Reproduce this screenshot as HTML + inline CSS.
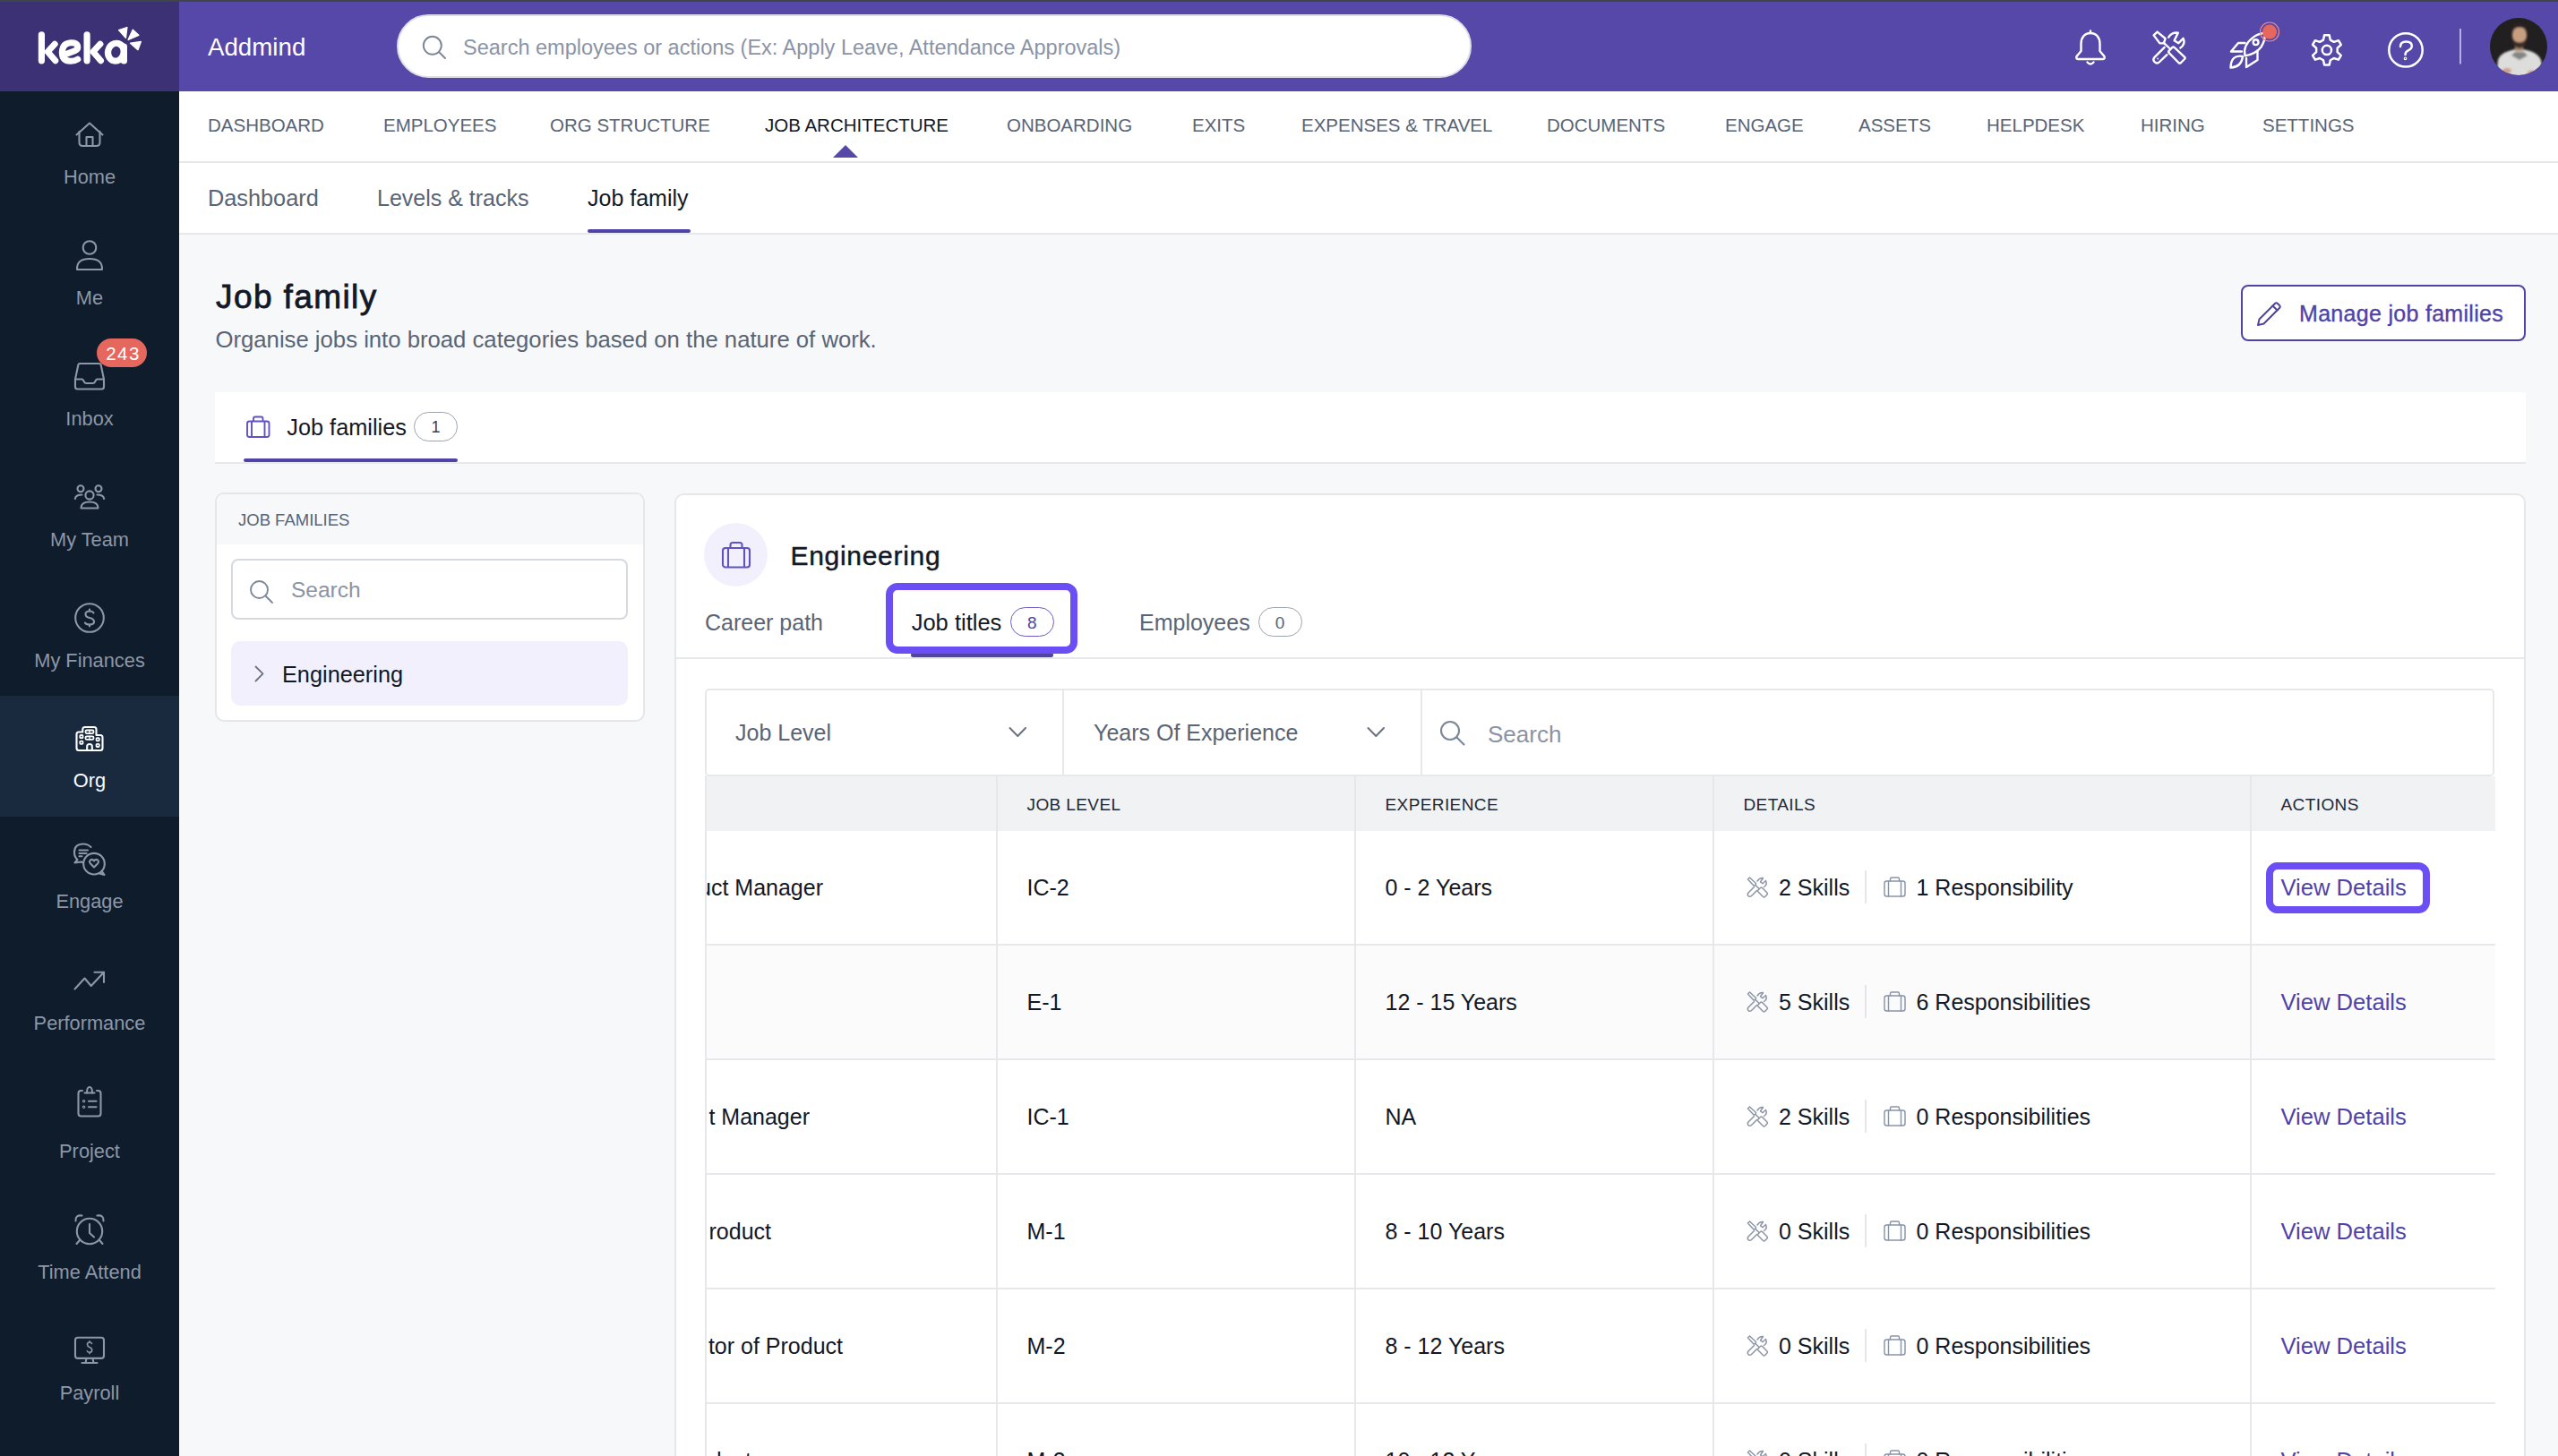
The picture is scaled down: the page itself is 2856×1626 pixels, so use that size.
<!DOCTYPE html>
<html>
<head>
<meta charset="utf-8">
<style>
*{margin:0;padding:0;box-sizing:border-box;}
html,body{width:2856px;height:1626px;overflow:hidden;background:#f7f8fa;font-family:"Liberation Sans",sans-serif;}
.a{position:absolute;}
.t{position:absolute;white-space:nowrap;line-height:1;}
svg{position:absolute;overflow:visible;}
/* top */
#strip{left:0;top:0;width:2856px;height:2px;background:#40454a;}
#logo{left:0;top:2px;width:200px;height:100px;background:#3c3175;}
#hdr{left:200px;top:2px;width:2656px;height:100px;background:#5548a8;}
#search{left:443px;top:16px;width:1200px;height:71px;border-radius:36px;background:#fff;border:2px solid #dcdde6;}
#side{left:0;top:102px;width:200px;height:1524px;background:#0e1c2b;}
.sitem{position:absolute;left:0;width:200px;height:135px;}
.sitem.on{background:#192a3f;}
.slab{position:absolute;left:0;width:200px;text-align:center;font-size:21.8px;line-height:1;top:85px;color:#8d97a7;white-space:nowrap;}
.sitem.on .slab{color:#fff;}
#nav{left:200px;top:102px;width:2656px;height:80px;background:#fff;border-bottom:2px solid #e6e8eb;}
.nv{font-size:20.5px;color:#596475;top:129.6px;}
#sub{left:200px;top:182px;width:2656px;height:80px;background:#fff;border-bottom:2px solid #e6e8eb;}
.sb{font-size:25px;color:#596475;top:209px;}
.dark{color:#121826;}
.gray{color:#596475;}
.ph{color:#8a94a6;}
.purple{color:#4f43a7;}
.th{font-size:19px;color:#1f2937;top:889px;letter-spacing:0.4px;}
.td{font-size:25px;}

</style>
</head>
<body>
<div id="strip" class="a"></div>
<div id="logo" class="a"></div>
<svg style="left:0;top:0" width="200" height="102" viewBox="0 0 200 102" fill="none" stroke="#fff" stroke-linecap="round" stroke-linejoin="round">
  <path d="M46.4,38.8 V67.8" stroke-width="7.2"/>
  <path d="M61.2,49.2 L53.2,57.8 L61.8,67.8" stroke-width="7"/>
  <path d="M97.1,38.8 V67.8" stroke-width="7.2"/>
  <path d="M111.9,49.2 L103.9,57.8 L112.5,67.8" stroke-width="7"/>
  <path d="M73.5,60.5 L83.5,56.8 Q87.8,55 86.5,50.8 Q85,47.5 79,47.8 Q69.8,48.4 69.3,58.3 Q69.2,68.2 78.8,68.3 Q83.5,68.4 86.8,66.2" stroke-width="7"/>
  <ellipse cx="129.4" cy="58.2" rx="8.8" ry="10" stroke-width="7.2" transform="rotate(15 129.4 58.2)"/>
  <path d="M138.4,52 V68" stroke-width="7.2"/>
  <g fill="#fff" stroke-width="1.5">
    <polygon points="132.6,33.6 141.8,30.6 140.4,42.2"/>
    <polygon points="143.2,44.4 148.3,33.2 154.8,39.3"/>
    <polygon points="145.6,48.2 157.3,46.5 154,55.6"/>
  </g>
</svg>

<div id="hdr" class="a"></div>
<div class="t" style="left:232px;top:39px;font-size:27.7px;color:#fff;">Addmind</div>
<div id="search" class="a"></div>
<svg style="left:471px;top:38.5px" width="28" height="28" viewBox="0 0 28 28"><circle cx="11.8" cy="11.8" r="10" fill="none" stroke="#7d879a" stroke-width="1.9"/><line x1="19" y1="19" x2="26" y2="26" stroke="#7d879a" stroke-width="1.9" stroke-linecap="round"/></svg>
<div class="t ph" style="left:517px;top:42px;font-size:23.5px;">Search employees or actions (Ex: Apply Leave, Attendance Approvals)</div>


<!-- HEADER ICONS -->
<svg style="left:0;top:0" width="2856" height="102" viewBox="0 0 2856 102" fill="none" stroke="#ffffff" stroke-width="2.4" stroke-linecap="round" stroke-linejoin="round">
  <!-- bell -->
  <path d="M2334,34.5 V37"/>
  <path d="M2334,37 C2327,37 2323.5,42.5 2323.5,49 V57 L2318.5,63 Q2317.5,66 2320.5,66 H2347.5 Q2350.5,66 2349.5,63 L2344.5,57 V49 C2344.5,42.5 2341,37 2334,37 Z"/>
  <path d="M2330.5,69.5 Q2334,73.5 2337.5,69.5"/>
  <!-- tools -->
  <path d="M2404.6,39.4 L2408.6,35.6 L2417.6,43 L2416,48.2 L2411.4,48.4 Z"/>
  <path d="M2415.6,47.6 L2422.4,54"/>
  <path d="M2421.8,56.6 L2425.2,53.2 Q2426.5,52 2427.8,53.2 L2439,63.6 Q2440.2,64.8 2439,66 L2435,70 Q2433.7,71.2 2432.4,70 L2421.8,59.2 Q2420.6,57.9 2421.8,56.6 Z"/>
  <path d="M2416.6,52.8 L2405.8,63.6 Q2403,66.5 2405.6,69.2 Q2408.3,71.8 2411.2,69 L2419.4,61.2"/>
  <path d="M2421.2,41.6 Q2424.5,36 2431.8,36.6 L2427.6,45.2 L2432.3,48.2 L2437.6,42.8 Q2440.5,49.5 2434.3,53.4"/>
  <circle cx="2409.2" cy="65.4" r="0.3" stroke-width="1.4"/>
  <!-- rocket -->
  <path d="M2506.6,62.4 Q2503.8,50.5 2515.8,41.6 Q2521,37.6 2529,36.6 Q2529,46 2524.5,52.5 Q2519,60 2506.6,62.4 Z"/>
  <circle cx="2518.6" cy="47.2" r="2.9"/>
  <path d="M2506.5,48 H2499 L2491,57.5 H2503"/>
  <path d="M2520.5,56.5 V67 L2508,75 V65"/>
  <path d="M2504,63 Q2491,60.5 2490.5,75.5 Q2502.5,75 2504,63 Z"/>
</svg>
<svg style="left:0;top:0" width="2856" height="102" viewBox="0 0 2856 102" fill="none" stroke="#ffffff" stroke-width="2.5" stroke-linecap="round" stroke-linejoin="round">
  <!-- red dot -->
  <circle cx="2534" cy="35.5" r="10.5" stroke="#f08a80" stroke-width="1.2" fill="none"/>
  <circle cx="2534" cy="35.5" r="8" fill="#e5675e" stroke="none"/>
  <!-- gear -->
  <path id="gear" d="M2593.99,44.55 L2595.11,39.23 L2600.69,39.23 L2601.81,44.55 L2605.77,46.84 L2610.94,45.15 L2613.73,49.98 L2609.68,53.61 L2609.68,58.19 L2613.73,61.82 L2610.94,66.65 L2605.77,64.96 L2601.81,67.25 L2600.69,72.57 L2595.11,72.57 L2593.99,67.25 L2590.03,64.96 L2584.86,66.65 L2582.07,61.82 L2586.12,58.19 L2586.12,53.61 L2582.07,49.98 L2584.86,45.15 L2590.03,46.84 Z"/>
  <circle cx="2597.9" cy="55.9" r="5.1"/>
  <!-- help -->
  <circle cx="2686" cy="55.9" r="18.7"/>
  <path d="M2680,52 Q2680,46.5 2686.5,46.5 Q2692.8,46.5 2692.8,51.5 Q2692.8,54.5 2688.5,56.5 Q2685.5,58 2685.5,61"/>
  <circle cx="2685.5" cy="65.3" r="0.6" stroke-width="2.6"/>
  <!-- divider -->
  <path d="M2747,32 V71.5" stroke="#b6afe0" stroke-width="2" stroke-linecap="butt"/>
</svg>
<!-- avatar -->
<svg style="left:2780px;top:20px" width="64" height="64" viewBox="0 0 64 64">
  <defs><clipPath id="avc"><circle cx="32" cy="32" r="32"/></clipPath>
  <filter id="blr" x="-10%" y="-10%" width="120%" height="120%"><feGaussianBlur stdDeviation="0.9"/></filter></defs>
  <g clip-path="url(#avc)">
    <rect width="64" height="64" fill="#211f20"/>
    <g filter="url(#blr)">
    <path d="M7,66 L9,47 Q11,40 21,37 L28,35 H37 L45,37 Q54,40 57,47 L60,66 Z" fill="#dddddb"/>
    <path d="M24,42 L33,47 L42,42 L38,38 H28 Z" fill="#858583"/>
    <rect x="28" y="27" width="9" height="10" fill="#a98468"/>
    <ellipse cx="33" cy="20" rx="8.2" ry="10.5" fill="#c79e80"/>
    <path d="M24.5,17 Q23.5,5 33,5 Q42,5 41.5,17 Q40.5,10.5 33,10.5 Q26,10.5 24.5,17 Z" fill="#2a2220"/>
    <path d="M25,21 Q25,33 33,34 Q41,33 41,21 Q39,27.5 33,27.5 Q27,27.5 25,21 Z" fill="#3a2d27"/>
    <ellipse cx="19" cy="59" rx="5" ry="3" fill="#d09f86"/>
    <ellipse cx="47" cy="61" rx="5" ry="2.5" fill="#d09f86"/>
    </g>
  </g>
</svg>

<div id="side" class="a"></div>

<!-- SIDEBAR -->
<div class="sitem" style="top:102px"><div class="slab" style="top:84.82px">Home</div></div>
<div class="sitem" style="top:237px"><div class="slab" style="top:84.52px">Me</div></div>
<div class="sitem" style="top:372px"><div class="slab" style="top:84.72px">Inbox</div></div>
<div class="sitem" style="top:507px"><div class="slab" style="top:84.82px">My Team</div></div>
<div class="sitem" style="top:642px"><div class="slab" style="top:84.52px">My Finances</div></div>
<div class="sitem on" style="top:777px"><div class="slab" style="top:84.32px">Org</div></div>
<div class="sitem" style="top:912px"><div class="slab" style="top:84.32px">Engage</div></div>
<div class="sitem" style="top:1047px"><div class="slab" style="top:84.52px">Performance</div></div>
<div class="sitem" style="top:1182px"><div class="slab" style="top:92.52px">Project</div></div>
<div class="sitem" style="top:1317px"><div class="slab" style="top:92.82px">Time Attend</div></div>
<div class="sitem" style="top:1452px"><div class="slab" style="top:92.52px">Payroll</div></div>
<svg style="left:0;top:0" width="200" height="1626" viewBox="0 0 200 1626" fill="none" stroke="#8d97a7" stroke-width="2.1" stroke-linecap="round" stroke-linejoin="round">
  <!-- home -->
  <path d="M85.5,150.5 L100,137.5 L114.5,150.5"/>
  <path d="M88.5,147 V159 Q88.5,163 92.5,163 H107.5 Q111.5,163 111.5,159 V147"/>
  <path d="M96.5,163 V153 H103.5 V163" stroke-linecap="butt"/>
  <!-- me -->
  <circle cx="100" cy="276.5" r="7.3"/>
  <path d="M86,301 Q85.5,289 100,289 Q114.5,289 114,301 Z"/>
  <!-- inbox -->
  <path d="M89,406 H111 Q112.3,406 112.6,407.3 L116,423.5 V432 Q116,434.5 113.5,434.5 H86.5 Q84,434.5 84,432 V423.5 L87.4,407.3 Q87.7,406 89,406 Z"/>
  <path d="M84,423.5 H91.5 Q92.5,423.5 93.2,425 L94,426.5 Q94.8,428 96.3,428 H103.7 Q105.2,428 106,426.5 L106.8,425 Q107.5,423.5 108.5,423.5 H116"/>
  <!-- team -->
  <circle cx="100" cy="553" r="4.6"/>
  <path d="M90.5,567.5 Q90.5,560.5 100,560.5 Q109.5,560.5 109.5,567.5 Z"/>
  <circle cx="90" cy="545.8" r="3.5"/>
  <circle cx="110" cy="545.8" r="3.5"/>
  <path d="M83.8,557 Q84.5,552.5 91.5,552.5"/>
  <path d="M116.2,557 Q115.5,552.5 108.5,552.5"/>
  <!-- finances -->
  <circle cx="100" cy="690" r="15.8"/>
  <path d="M104.5,684.5 Q103.5,682.5 100,682.5 Q95.5,682.5 95.5,686 Q95.5,689 100,690 Q105,691 105,694.5 Q105,697.5 100,697.5 Q96,697.5 95,695.5"/>
  <path d="M100,680.5 V682.5 M100,697.5 V699.5"/>
  <!-- engage -->
  <path d="M101.5,946 Q98,942.5 93,942.5 Q83,942.5 83,952 Q83,957 86.5,960 L83.5,963.5 L90.5,962.5 Q91.5,963 93,963"/>
  <path d="M88.5,949.5 H98 M88.5,953 H96.5 M88.5,956.2 H91.5"/>
  <circle cx="105" cy="964.7" r="11.8"/>
  <path d="M113.5,973 L116.5,977 L111,975.5"/>
  <path d="M105,968.5 L100.8,964.2 Q99,962 101,960.5 Q103.3,959 105,961.5 Q106.7,959 109,960.5 Q111,962 109.2,964.2 Z"/>
  <!-- performance -->
  <path d="M83.5,1104.5 L94.5,1092.5 L101.7,1101 L116,1085.8"/>
  <path d="M105.5,1085.8 H116 V1097"/>
  <!-- project -->
  <path d="M92,1218 H90.5 Q87.5,1218 87.5,1221 V1243.5 Q87.5,1246.5 90.5,1246.5 H109.5 Q112.5,1246.5 112.5,1243.5 V1221 Q112.5,1218 109.5,1218 H108"/>
  <path d="M94.5,1220.5 H105.5"/>
  <path d="M97,1220.5 Q97,1214 100,1214 Q103,1214 103,1220.5"/>
  <path d="M99,1229.8 H107.5 M99,1236.3 H107.5"/>
  <circle cx="93.6" cy="1229.8" r="0.6" stroke-width="2.4"/>
  <circle cx="93.6" cy="1236.3" r="0.6" stroke-width="2.4"/>
  <!-- time -->
  <circle cx="100" cy="1375" r="14.2"/>
  <path d="M100,1367 V1377 L105,1381.5"/>
  <path d="M84.5,1363.5 Q84,1356.5 91.5,1357.5"/>
  <path d="M115.5,1363.5 Q116,1356.5 108.5,1357.5"/>
  <path d="M89,1385 L85.5,1389 M111,1385 L114.5,1389"/>
  <!-- payroll -->
  <rect x="84" y="1493.7" width="32" height="23.2" rx="3"/>
  <path d="M96.5,1517 L95.5,1522 M103.5,1517 L104.5,1522 M91.5,1522 H108.5"/>
  <path d="M102.5,1500.5 Q102,1499 100,1499 Q97.5,1499 97.5,1501.5 Q97.5,1503.5 100,1504.5 Q102.7,1505.5 102.7,1507.7 Q102.7,1510.3 100,1510.3 Q97.8,1510.3 97.3,1508.8 M100,1497.7 V1499 M100,1510.3 V1511.7" stroke-width="1.6"/>
  <!-- org (white) -->
  <g stroke="#ffffff">
    <path d="M92.3,817.5 H88 Q85.5,817.5 85.5,820 V835.5 Q85.5,838 88,838 H112 Q114.5,838 114.5,835.5 V823.5 Q114.5,821 112,821 H107.5 V814.5 Q107.5,812 105,812 H95 Q92.3,812 92.3,814.5 Z"/>
    <path d="M97.2,838 V833.5 Q97.2,831 100,831 Q102.8,831 102.8,833.5 V838"/>
    <rect x="95.5" y="815.5" width="9" height="3.6" rx="1.5" stroke-width="1.8"/>
    <rect x="95.5" y="822.3" width="9" height="3.6" rx="1.5" stroke-width="1.8"/>
    <path d="M100,815.5 V819 M100,822.3 V826" stroke-width="1.4"/>
    <rect x="89.3" y="821" width="3.2" height="3.2" rx="0.8" stroke-width="1.8"/>
    <rect x="89.3" y="827.6" width="3.2" height="3.2" rx="0.8" stroke-width="1.8"/>
    <rect x="107.6" y="824.2" width="3.2" height="3.2" rx="0.8" stroke-width="1.8"/>
    <rect x="107.6" y="830.8" width="3.2" height="3.2" rx="0.8" stroke-width="1.8"/>
  </g>
</svg>
<div class="a" style="left:108px;top:378px;width:56px;height:32px;border-radius:16px;background:#e5675e;"></div>
<div class="t" style="left:109.5px;top:384.5px;width:56px;text-align:center;font-size:20.5px;letter-spacing:1.5px;color:#fff;">243</div>

<div id="nav" class="a"></div>
<div class="t nv" style="left:232px">DASHBOARD</div>
<div class="t nv" style="left:428px">EMPLOYEES</div>
<div class="t nv" style="left:614px">ORG STRUCTURE</div>
<div class="t nv dark" style="left:854px">JOB ARCHITECTURE</div>
<div class="t nv" style="left:1124px">ONBOARDING</div>
<div class="t nv" style="left:1331px">EXITS</div>
<div class="t nv" style="left:1453px">EXPENSES &amp; TRAVEL</div>
<div class="t nv" style="left:1727px">DOCUMENTS</div>
<div class="t nv" style="left:1926px">ENGAGE</div>
<div class="t nv" style="left:2075px">ASSETS</div>
<div class="t nv" style="left:2218px">HELPDESK</div>
<div class="t nv" style="left:2390px">HIRING</div>
<div class="t nv" style="left:2526px">SETTINGS</div>
<svg style="left:930px;top:162px" width="28" height="14" viewBox="0 0 28 14"><polygon points="14,0 28,14 0,14" fill="#5548a8"/></svg>

<div id="sub" class="a"></div>
<div class="t sb" style="left:232px;font-size:25.3px;top:208.7px">Dashboard</div>
<div class="t sb" style="left:421px">Levels &amp; tracks</div>
<div class="t sb dark" style="left:656px">Job family</div>
<div class="a" style="left:656px;top:256px;width:115px;height:4px;border-radius:2px;background:#4f43a7"></div>


<!-- MAIN -->
<div class="t dark" style="left:241px;top:312.6px;font-size:37px;letter-spacing:1.4px;-webkit-text-stroke:0.8px #121826;">Job family</div>
<div class="t gray" style="left:240.5px;top:366.7px;font-size:25.7px;">Organise jobs into broad categories based on the nature of work.</div>
<div class="a" style="left:2502px;top:318px;width:318px;height:63px;border:2px solid #4f43a7;border-radius:8px;background:#fff;"></div>
<svg style="left:2518px;top:334px" width="32" height="32" viewBox="0 0 32 32" fill="none" stroke="#4f43a7" stroke-width="2" stroke-linejoin="round" stroke-linecap="round">
  <path d="M3,29 L4.5,22.5 L22,5 Q23.5,3.5 25,5 L27,7 Q28.5,8.5 27,10 L9.5,27.5 Z"/>
  <path d="M19.5,7.5 L24.5,12.5"/>
</svg>
<div class="t purple" style="left:2567px;top:337.8px;font-size:25px;letter-spacing:0.3px;-webkit-text-stroke:0.35px #4f43a7;">Manage job families</div>

<div class="a" style="left:240px;top:438px;width:2580px;height:80px;background:#fff;border-bottom:2px solid #e6e8eb;"></div>
<svg style="left:272px;top:462px" width="32" height="30" viewBox="0 0 32 30" fill="none" stroke="#5f52c4" stroke-width="1.9" stroke-linejoin="round">
  <rect x="4" y="8.5" width="24.5" height="17.5" rx="2.5"/>
  <path d="M11,8.5 V5.5 Q11,3.5 13,3.5 H19.5 Q21.5,3.5 21.5,5.5 V8.5"/>
  <path d="M9,8.5 V26 M23.5,8.5 V26"/>
</svg>
<div class="t dark" style="left:320.3px;top:465.2px;font-size:25.3px;">Job families</div>
<div class="a" style="left:462px;top:460px;width:49px;height:33px;border:1.5px solid #9ca3af;border-radius:17px;"></div>
<div class="t" style="left:462px;top:468px;width:49px;text-align:center;font-size:18px;color:#374151;">1</div>
<div class="a" style="left:272px;top:512px;width:239px;height:4px;border-radius:2px;background:#4f43a7"></div>

<!-- LEFT CARD -->
<div class="a" style="left:240px;top:550px;width:480px;height:256px;border:2px solid #e4e6ea;border-radius:10px;background:#fff;overflow:hidden;">
  <div class="a" style="left:0;top:0;width:476px;height:56px;background:#f7f8fa;"></div>
</div>
<div class="t gray" style="left:266px;top:572px;font-size:18.5px;">JOB FAMILIES</div>
<div class="a" style="left:258px;top:624px;width:443px;height:67.5px;border:2px solid #d6d9de;border-radius:8px;background:#fff;"></div>
<svg style="left:278px;top:647px" width="28" height="28" viewBox="0 0 28 28" fill="none" stroke="#7d879a" stroke-width="1.85" stroke-linecap="round"><circle cx="11.5" cy="11.5" r="9.5"/><line x1="18.5" y1="18.5" x2="26" y2="26"/></svg>
<div class="t ph" style="left:325px;top:647px;font-size:24.5px;">Search</div>
<div class="a" style="left:258px;top:716px;width:443px;height:72px;border-radius:10px;background:#f3f0fd;"></div>
<svg style="left:280px;top:740px" width="20" height="24" viewBox="0 0 20 24" fill="none" stroke="#6b7280" stroke-width="1.8" stroke-linecap="round" stroke-linejoin="round"><path d="M5.5,4.5 L13.5,12.3 L5.5,20.5"/></svg>
<div class="t dark" style="left:315px;top:740.6px;font-size:25.3px;">Engineering</div>

<!-- RIGHT CARD -->
<div class="a" style="left:753px;top:551px;width:2067px;height:1100px;border:2px solid #e6e7eb;border-radius:10px;background:#fff;"></div>
<div class="a" style="left:786px;top:584px;width:71px;height:71px;border-radius:50%;background:#f3f0fd;"></div>
<svg style="left:803px;top:602px" width="38" height="36" viewBox="0 0 38 36" fill="none" stroke="#5f52c4" stroke-width="2.1" stroke-linejoin="round">
  <rect x="4" y="10" width="30" height="21.5" rx="3"/>
  <path d="M12.5,10 V6.5 Q12.5,4 15,4 H23 Q25.5,4 25.5,6.5 V10"/>
  <path d="M10,10 V31.5 M28,10 V31.5"/>
</svg>
<div class="t dark" style="left:882.5px;top:605.6px;font-size:30px;letter-spacing:0.7px;-webkit-text-stroke:0.45px #121826;">Engineering</div>

<div class="t gray" style="left:787px;top:683px;font-size:25px;">Career path</div>
<div class="t dark" style="left:1017.7px;top:682.6px;font-size:25.5px;">Job titles</div>
<div class="a" style="left:1128px;top:678px;width:48.5px;height:33px;border:1.5px solid #6a5cc9;border-radius:17px;"></div>
<div class="t purple" style="left:1128px;top:686px;width:48.5px;text-align:center;font-size:19px;">8</div>
<div class="t gray" style="left:1272px;top:683px;font-size:25px;">Employees</div>
<div class="a" style="left:1404.5px;top:678px;width:49px;height:33px;border:1.5px solid #9ca3af;border-radius:17px;"></div>
<div class="t gray" style="left:1404.5px;top:686px;width:49px;text-align:center;font-size:19px;">0</div>
<div class="a" style="left:755px;top:734px;width:2063px;height:2px;background:#e6e8eb;"></div>
<div class="a" style="left:1017px;top:729px;width:159px;height:5px;border-radius:2.5px;background:#4f43a7"></div>

<!-- FILTER BAR -->
<div class="a" style="left:787px;top:769px;width:1998px;height:98px;border:2px solid #e6e8ec;border-radius:5px;background:#fff;"></div>
<div class="a" style="left:1186px;top:771px;width:2px;height:95px;background:#e6e8ec;"></div>
<div class="a" style="left:1586px;top:771px;width:2px;height:95px;background:#e6e8ec;"></div>
<div class="t gray" style="left:821px;top:806px;font-size:25px;">Job Level</div>
<div class="t gray" style="left:1221px;top:806px;font-size:25px;">Years Of Experience</div>
<svg style="left:0;top:0" width="2856" height="1626" viewBox="0 0 2856 1626" fill="none" stroke="#6b7280" stroke-width="2" stroke-linecap="round" stroke-linejoin="round">
  <path d="M1127.5,813 L1136.3,822 L1145,813"/>
  <path d="M1527.5,813 L1536.3,822 L1545,813"/>
</svg>
<svg style="left:1607px;top:804px" width="30" height="30" viewBox="0 0 30 30" fill="none" stroke="#7d879a" stroke-width="2.1" stroke-linecap="round"><circle cx="12" cy="12" r="10"/><line x1="19.5" y1="19.5" x2="27.5" y2="27.5"/></svg>
<div class="t ph" style="left:1661px;top:807px;font-size:26px;">Search</div>


<!-- TABLE -->
<div class="a" style="left:787px;top:867px;width:1999px;height:61px;background:#f1f2f4;"></div>
<div class="a" style="left:787px;top:866px;width:2px;height:760px;background:#e6e8ec;"></div>
<div class="a" style="left:789px;top:928px;width:1997px;height:126px;background:#ffffff;"></div>
<div class="a" style="left:789px;top:1054px;width:1997px;height:2px;background:#e6e8ec;"></div>
<div class="a" style="left:789px;top:1056px;width:1997px;height:126px;background:#fbfbfc;"></div>
<div class="a" style="left:789px;top:1182px;width:1997px;height:2px;background:#e6e8ec;"></div>
<div class="a" style="left:789px;top:1184px;width:1997px;height:126px;background:#ffffff;"></div>
<div class="a" style="left:789px;top:1310px;width:1997px;height:2px;background:#e6e8ec;"></div>
<div class="a" style="left:789px;top:1312px;width:1997px;height:126px;background:#ffffff;"></div>
<div class="a" style="left:789px;top:1438px;width:1997px;height:2px;background:#e6e8ec;"></div>
<div class="a" style="left:789px;top:1440px;width:1997px;height:126px;background:#ffffff;"></div>
<div class="a" style="left:789px;top:1566px;width:1997px;height:2px;background:#e6e8ec;"></div>
<div class="a" style="left:789px;top:1568px;width:1997px;height:126px;background:#ffffff;"></div>
<div class="a" style="left:789px;top:1694px;width:1997px;height:2px;background:#e6e8ec;"></div>
<div class="a" style="left:1112px;top:866px;width:2px;height:760px;background:#e6e8ec;"></div>
<div class="a" style="left:1512px;top:866px;width:2px;height:760px;background:#e6e8ec;"></div>
<div class="a" style="left:1912px;top:866px;width:2px;height:760px;background:#e6e8ec;"></div>
<div class="a" style="left:2512px;top:866px;width:2px;height:760px;background:#e6e8ec;"></div>
<div class="t th" style="left:1146.5px;">JOB LEVEL</div>
<div class="t th" style="left:1546.5px;">EXPERIENCE</div>
<div class="t th" style="left:1946.5px;">DETAILS</div>
<div class="t th" style="left:2546.5px;">ACTIONS</div>
<div class="a" style="left:789px;top:959px;width:323px;height:60px;overflow:hidden;"><div class="t dark rt" style="right:193px;top:20px;font-size:25px;">Product Manager</div></div>
<div class="t dark td" style="left:1146.5px;top:979.3px;">IC-2</div>
<div class="t dark td" style="left:1546.5px;top:979.3px;">0 - 2 Years</div>
<div class="t dark td" style="left:1986px;top:979.3px;">2 Skills</div>
<div class="t dark td" style="left:2139.5px;top:979.3px;">1 Responsibility</div>
<div class="t purple td" style="font-size:25.6px;left:2546.5px;top:979.3px;">View Details</div>
<div class="t dark td" style="left:1146.5px;top:1107.3px;">E-1</div>
<div class="t dark td" style="left:1546.5px;top:1107.3px;">12 - 15 Years</div>
<div class="t dark td" style="left:1986px;top:1107.3px;">5 Skills</div>
<div class="t dark td" style="left:2139.5px;top:1107.3px;">6 Responsibilities</div>
<div class="t purple td" style="font-size:25.6px;left:2546.5px;top:1107.3px;">View Details</div>
<div class="a" style="left:789px;top:1215px;width:323px;height:60px;overflow:hidden;"><div class="t dark rt" style="right:208px;top:20px;font-size:25px;">t Manager</div></div>
<div class="t dark td" style="left:1146.5px;top:1235.3px;">IC-1</div>
<div class="t dark td" style="left:1546.5px;top:1235.3px;">NA</div>
<div class="t dark td" style="left:1986px;top:1235.3px;">2 Skills</div>
<div class="t dark td" style="left:2139.5px;top:1235.3px;">0 Responsibilities</div>
<div class="t purple td" style="font-size:25.6px;left:2546.5px;top:1235.3px;">View Details</div>
<div class="a" style="left:789px;top:1343px;width:323px;height:60px;overflow:hidden;"><div class="t dark rt" style="right:251px;top:20px;font-size:25px;">roduct</div></div>
<div class="t dark td" style="left:1146.5px;top:1363.3px;">M-1</div>
<div class="t dark td" style="left:1546.5px;top:1363.3px;">8 - 10 Years</div>
<div class="t dark td" style="left:1986px;top:1363.3px;">0 Skills</div>
<div class="t dark td" style="left:2139.5px;top:1363.3px;">0 Responsibilities</div>
<div class="t purple td" style="font-size:25.6px;left:2546.5px;top:1363.3px;">View Details</div>
<div class="a" style="left:789px;top:1471px;width:323px;height:60px;overflow:hidden;"><div class="t dark rt" style="right:171px;top:20px;font-size:25px;">tor of Product</div></div>
<div class="t dark td" style="left:1146.5px;top:1491.3px;">M-2</div>
<div class="t dark td" style="left:1546.5px;top:1491.3px;">8 - 12 Years</div>
<div class="t dark td" style="left:1986px;top:1491.3px;">0 Skills</div>
<div class="t dark td" style="left:2139.5px;top:1491.3px;">0 Responsibilities</div>
<div class="t purple td" style="font-size:25.6px;left:2546.5px;top:1491.3px;">View Details</div>
<div class="a" style="left:789px;top:1599px;width:323px;height:60px;overflow:hidden;"><div class="t dark rt" style="right:273px;top:20px;font-size:25px;">Head of Product</div></div>
<div class="t dark td" style="left:1146.5px;top:1619.3px;">M-3</div>
<div class="t dark td" style="left:1546.5px;top:1619.3px;">10 - 12 Years</div>
<div class="t dark td" style="left:1986px;top:1619.3px;">0 Skills</div>
<div class="t dark td" style="left:2139.5px;top:1619.3px;">0 Responsibilities</div>
<div class="t purple td" style="font-size:25.6px;left:2546.5px;top:1619.3px;">View Details</div>
<svg style="left:0;top:0" width="2856" height="1626" viewBox="0 0 2856 1626" fill="none" stroke="#8a94a6" stroke-width="1.45" stroke-linecap="round" stroke-linejoin="round">
<defs>
 <g id="isk">
  <path d="M1.5,3.5 L3.5,1.5 L10.5,8 L10,10 L8,10.5 Z"/>
  <path d="M10,10 L14,14"/>
  <path d="M13,15.5 L15.5,13 Q16.5,12 17.5,13 L23,18.5 Q24,19.5 23,20.5 L20.5,23 Q19.5,24 18.5,23 L13,17.5 Q12,16.5 13,15.5 Z"/>
  <path d="M8.5,12 L2,18.5 Q0.5,20.5 2,22 Q3.5,23.5 5.5,22 L11.5,16"/>
  <path d="M12,5.5 Q14.5,1.5 18.5,2 L15.5,6.5 L18,8.2 L21.5,5 Q23.5,9.5 19.5,12"/>
 </g>
 <g id="ibc">
  <rect x="1" y="5.5" width="23" height="17" rx="2.5"/>
  <path d="M7.5,5.5 V3 Q7.5,1.5 9,1.5 H16 Q17.5,1.5 17.5,3 V5.5"/>
  <path d="M5.5,5.5 V22.5 M19.5,5.5 V22.5"/>
 </g>
</defs>
<use href="#isk" x="1950" y="978.5"/><use href="#ibc" x="2103" y="978.5"/><path d="M2083,973.0 V1008.0" stroke="#e3e5ea" stroke-width="2"/>
<use href="#isk" x="1950" y="1106.5"/><use href="#ibc" x="2103" y="1106.5"/><path d="M2083,1101.0 V1136.0" stroke="#e3e5ea" stroke-width="2"/>
<use href="#isk" x="1950" y="1234.5"/><use href="#ibc" x="2103" y="1234.5"/><path d="M2083,1229.0 V1264.0" stroke="#e3e5ea" stroke-width="2"/>
<use href="#isk" x="1950" y="1362.5"/><use href="#ibc" x="2103" y="1362.5"/><path d="M2083,1357.0 V1392.0" stroke="#e3e5ea" stroke-width="2"/>
<use href="#isk" x="1950" y="1490.5"/><use href="#ibc" x="2103" y="1490.5"/><path d="M2083,1485.0 V1520.0" stroke="#e3e5ea" stroke-width="2"/>
<use href="#isk" x="1950" y="1618.5"/><use href="#ibc" x="2103" y="1618.5"/><path d="M2083,1613.0 V1648.0" stroke="#e3e5ea" stroke-width="2"/>
</svg>
<div class="a" style="left:988.5px;top:651px;width:214.5px;height:78.5px;border:8px solid #6b4ff5;border-radius:13px;"></div>
<div class="a" style="left:2530px;top:962.5px;width:182.5px;height:57px;border:8px solid #6b4ff5;border-radius:13px;"></div>

</body>
</html>
